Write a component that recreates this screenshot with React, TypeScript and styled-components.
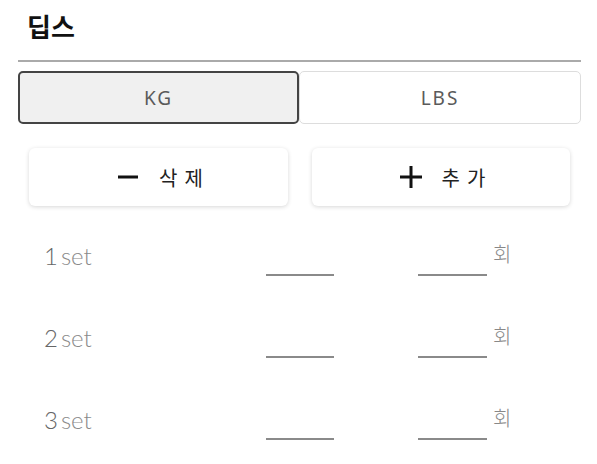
import React from "react";
import styled, { createGlobalStyle } from "styled-components";

const Global = createGlobalStyle`
  html, body { margin: 0; padding: 0; background: #fff; }
  body { font-family: "Noto Sans", "Noto Sans CJK KR", sans-serif; }
  * { box-sizing: border-box; }
`;

const Page = styled.div`
  width: 597px;
  padding: 0 16px 0 18px;
`;

const Title = styled.h1`
  margin: 0;
  padding: 7px 0 0 9px;
  height: 62px;
  font-family: "Noto Sans CJK KR", "Noto Sans", sans-serif;
  font-weight: 700;
  font-size: 26px;
  line-height: 37px;
  color: #111;
  border-bottom: 2px solid #aaa;
`;

const Toggle = styled.div`
  margin-top: 9px;
  display: grid;
  grid-template-columns: 281px 282px;
  height: 53px;
`;

const ToggleOption = styled.button<{ $active?: boolean }>`
  display: flex;
  align-items: center;
  justify-content: center;
  font-family: "Noto Sans", sans-serif;
  font-weight: 400;
  font-size: 19px;
  letter-spacing: 2px;
  color: #5a5a5a;
  background: ${(p) => (p.$active ? "#f0f0f0" : "#fff")};
  border: ${(p) => (p.$active ? "2px solid #444" : "1px solid #ddd")};
  border-radius: 5px;
  padding: 0;
`;

const Actions = styled.div`
  margin-top: 24px;
  padding: 0 11px;
  display: grid;
  grid-template-columns: 259px 258px;
  gap: 24px;
`;

const ActionButton = styled.button`
  height: 58px;
  display: flex;
  align-items: center;
  justify-content: center;
  gap: 20px;
  background: #fff;
  border: none;
  border-radius: 6px;
  box-shadow: 0 1px 4px rgba(0, 0, 0, 0.16);
  font-family: "Noto Sans CJK KR", "Noto Sans", sans-serif;
  font-size: 20px;
  letter-spacing: 7px;
  color: #222;
  padding: 0 0 0 10px;
`;

const Icon = styled.svg`
  width: 22px;
  height: 22px;
  flex: none;
`;

const Sets = styled.div`
  margin-top: 30px;
`;

const Row = styled.div`
  display: flex;
  align-items: flex-start;
  height: 82px;
  padding-left: 26px;
`;

const SetLabel = styled.div`
  width: 222px;
  margin-top: 6px;
  font-family: Lato, "Noto Sans", sans-serif;
  font-weight: 300;
  font-size: 24px;
  line-height: 28px;
  color: #8a8a8a;
`;

const Num = styled.span`
  color: #666;
  margin-right: 3px;
`;

const Blank = styled.input<{ $w: number; $ml?: number }>`
  width: ${(p) => p.$w}px;
  margin-left: ${(p) => p.$ml ?? 0}px;
  margin-top: 4px;
  height: 36px;
  border: none;
  border-bottom: 2px solid #8a8a8a;
  background: transparent;
  outline: none;
  padding: 0;
`;

const Unit = styled.span`
  margin-left: 6px;
  margin-top: 5px;
  font-family: "Noto Sans CJK KR", sans-serif;
  font-weight: 300;
  font-size: 20px;
  line-height: 26px;
  color: #888;
`;

const Minus = () => (
  <Icon viewBox="0 0 22 22">
    <rect x="1" y="9.5" width="20" height="3" fill="#111" />
  </Icon>
);

const Plus = () => (
  <Icon viewBox="0 0 22 22">
    <rect x="0" y="9.5" width="22" height="3" fill="#111" />
    <rect x="9.5" y="0" width="3" height="22" fill="#111" />
  </Icon>
);

export default function App() {
  const sets = [1, 2, 3];
  return (
    <Page>
      <Global />
      <Title>딥스</Title>
      <Toggle>
        <ToggleOption $active>KG</ToggleOption>
        <ToggleOption>LBS</ToggleOption>
      </Toggle>
      <Actions>
        <ActionButton>
          <Minus />
          삭제
        </ActionButton>
        <ActionButton>
          <Plus />
          추가
        </ActionButton>
      </Actions>
      <Sets>
        {sets.map((n) => (
          <Row key={n}>
            <SetLabel>
              <Num>{n}</Num>set
            </SetLabel>
            <Blank $w={68} />
            <Blank $w={69} $ml={84} />
            <Unit>회</Unit>
          </Row>
        ))}
      </Sets>
    </Page>
  );
}
